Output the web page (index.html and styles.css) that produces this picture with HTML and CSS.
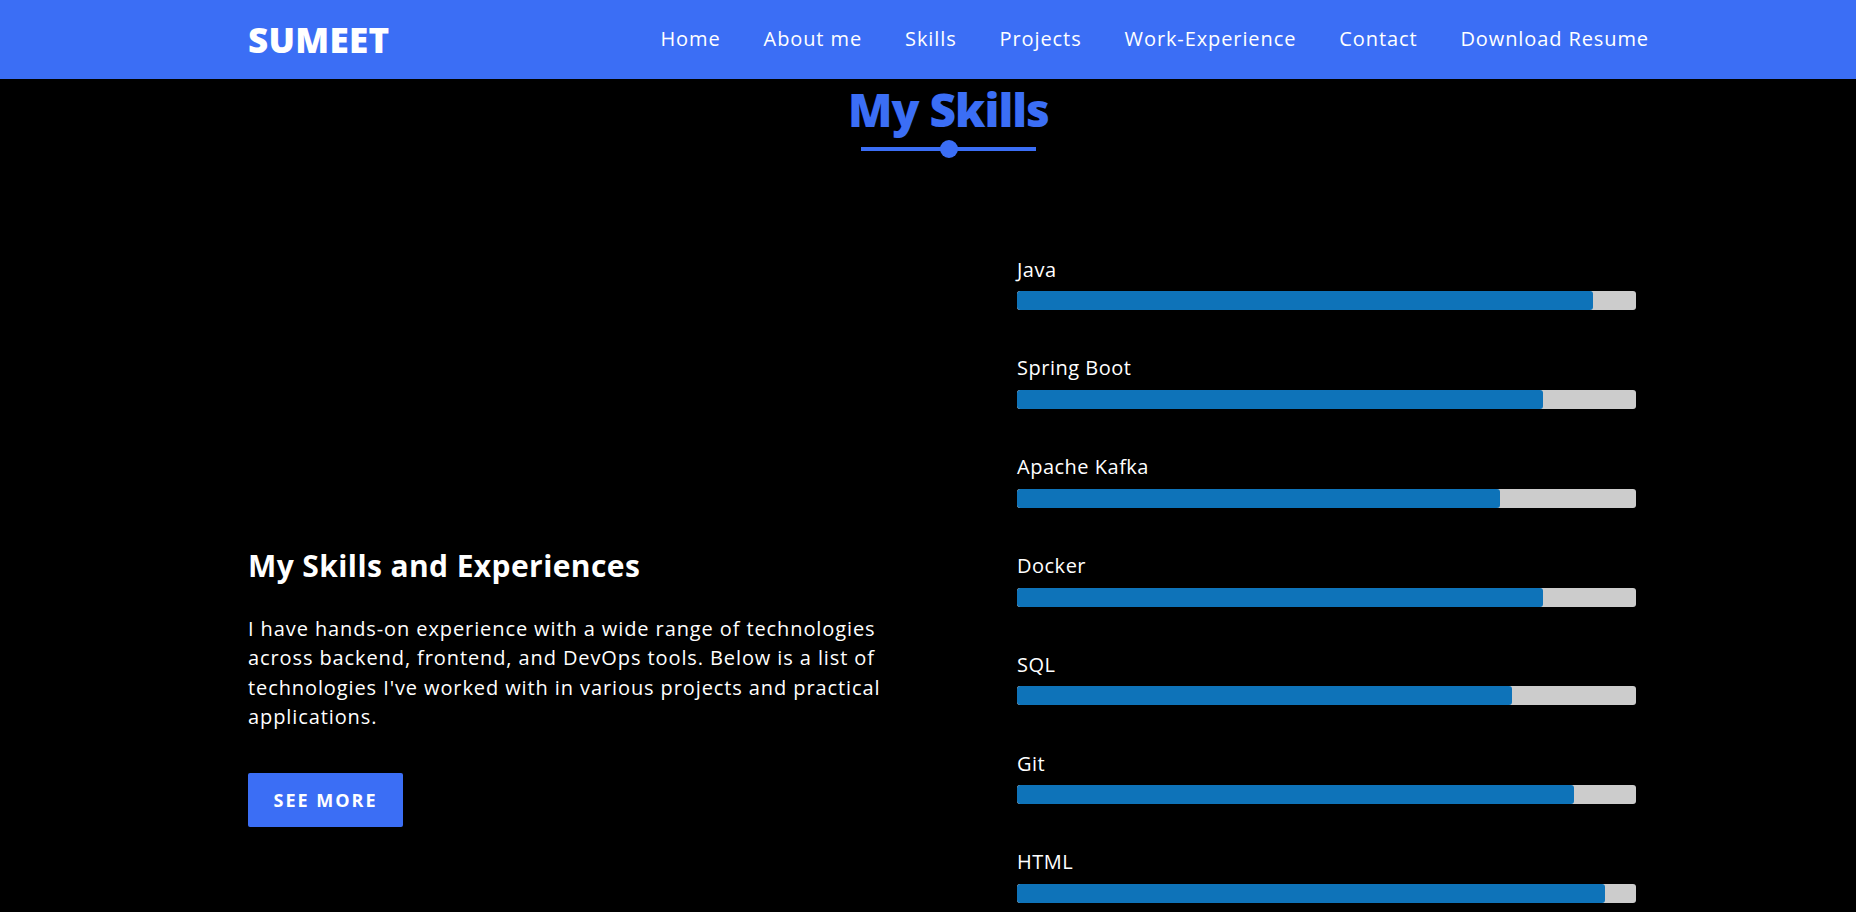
FILE: index.html
```html
<!DOCTYPE html>
<html lang="en">
<head>
<meta charset="utf-8">
<title>Sumeet - Skills</title>
<link rel="stylesheet" href="styles.css">
</head>
<body>
<header class="navbar">
  <div class="container nav-inner">
    <a class="logo" href="#">SUMEET</a>
    <ul class="nav-links">
      <li><a href="#">Home</a></li>
      <li><a href="#">About me</a></li>
      <li><a href="#">Skills</a></li>
      <li><a href="#">Projects</a></li>
      <li><a href="#">Work-Experience</a></li>
      <li><a href="#">Contact</a></li>
      <li><a href="#">Download Resume</a></li>
    </ul>
  </div>
</header>

<section class="skills">
  <div class="container">
    <h2 class="section-title">My Skills</h2>
    <div class="title-line"><span class="title-dot"></span></div>

    <div class="skills-row">
      <div class="skills-text">
        <h3 class="skills-heading">My Skills and Experiences</h3>
        <p class="skills-desc">I have hands-on experience with a wide range of technologies across backend, frontend, and DevOps tools. Below is a list of technologies I've worked with in various projects and practical applications.</p>
        <a class="btn" href="#">SEE MORE</a>
      </div>

      <div class="skills-bars">
        <div class="skill">
          <div class="skill-name">Java</div>
          <div class="bar"><div class="fill" style="width:93%"></div></div>
        </div>
        <div class="skill">
          <div class="skill-name">Spring Boot</div>
          <div class="bar"><div class="fill" style="width:85%"></div></div>
        </div>
        <div class="skill">
          <div class="skill-name">Apache Kafka</div>
          <div class="bar"><div class="fill" style="width:78%"></div></div>
        </div>
        <div class="skill">
          <div class="skill-name">Docker</div>
          <div class="bar"><div class="fill" style="width:85%"></div></div>
        </div>
        <div class="skill">
          <div class="skill-name">SQL</div>
          <div class="bar"><div class="fill" style="width:80%"></div></div>
        </div>
        <div class="skill">
          <div class="skill-name">Git</div>
          <div class="bar"><div class="fill" style="width:90%"></div></div>
        </div>
        <div class="skill">
          <div class="skill-name">HTML</div>
          <div class="bar"><div class="fill" style="width:95%"></div></div>
        </div>
      </div>
    </div>
  </div>
</section>
</body>
</html>
```

FILE: styles.css
```css
* {
  box-sizing: border-box;
}

html, body {
  margin: 0;
  padding: 0;
}

body {
  background: #000;
  color: #fff;
  font-family: "Open Sans", "Noto Sans", sans-serif;
}

a {
  text-decoration: none;
  color: inherit;
}

.container {
  width: 1401px;
  margin-left: 248px;
}

/* Navbar */
.navbar {
  background: #3b6ef5;
  height: 79px;
}

.nav-inner {
  height: 79px;
  display: flex;
  align-items: center;
  justify-content: space-between;
}

.logo {
  font-size: 35px;
  font-weight: 800;
  color: #fff;
  letter-spacing: 0.3px;
}

.nav-links {
  list-style: none;
  display: flex;
  gap: 43px;
  margin: 0;
  padding: 0;
}

.nav-links a {
  font-size: 20px;
  font-weight: 500;
  letter-spacing: 0.9px;
  color: #fff;
  line-height: 1.2;
  display: block;
  padding-bottom: 2px;
}

/* Skills section */
.section-title {
  margin: 3px 0 0;
  text-align: center;
  font-size: 46px;
  line-height: 1.2;
  font-weight: 800;
  color: #3b6ef5;
  letter-spacing: -1px;
}

.title-line {
  width: 175px;
  height: 4px;
  background: #3b6ef5;
  margin: 10px auto 0;
  display: flex;
  justify-content: center;
  align-items: center;
}

.title-dot {
  width: 18px;
  height: 18px;
  border-radius: 50%;
  background: #3b6ef5;
  flex: none;
}

.skills-row {
  display: grid;
  grid-template-columns: 640px 619px;
  column-gap: 129px;
  margin-top: 103.5px;
}

.skills-text {
  padding-top: 293px;
}

.skills-heading {
  margin: 0;
  font-size: 30px;
  line-height: 1.2;
  font-weight: 700;
  letter-spacing: 0.4px;
  color: #fff;
}

.skills-desc {
  margin: 30px 0 0;
  font-size: 20px;
  line-height: 29.6px;
  letter-spacing: 0.9px;
  color: #fff;
}

.btn {
  display: inline-block;
  margin-top: 41px;
  width: 155px;
  height: 54px;
  line-height: 54px;
  text-align: center;
  background: #3b6ef5;
  color: #fff;
  font-size: 18px;
  font-weight: 700;
  letter-spacing: 2px;
  border-radius: 2px;
}

.skill {
  margin-bottom: 43.3px;
}

.skill-name {
  font-size: 20px;
  line-height: 30px;
  letter-spacing: 0.5px;
  color: #fff;
}

.bar {
  margin-top: 6.5px;
  height: 19px;
  background: #cccccc;
  border-radius: 3px;
  overflow: hidden;
}

.fill {
  height: 100%;
  background: #0e73b9;
  border-radius: 3px;
}
```
